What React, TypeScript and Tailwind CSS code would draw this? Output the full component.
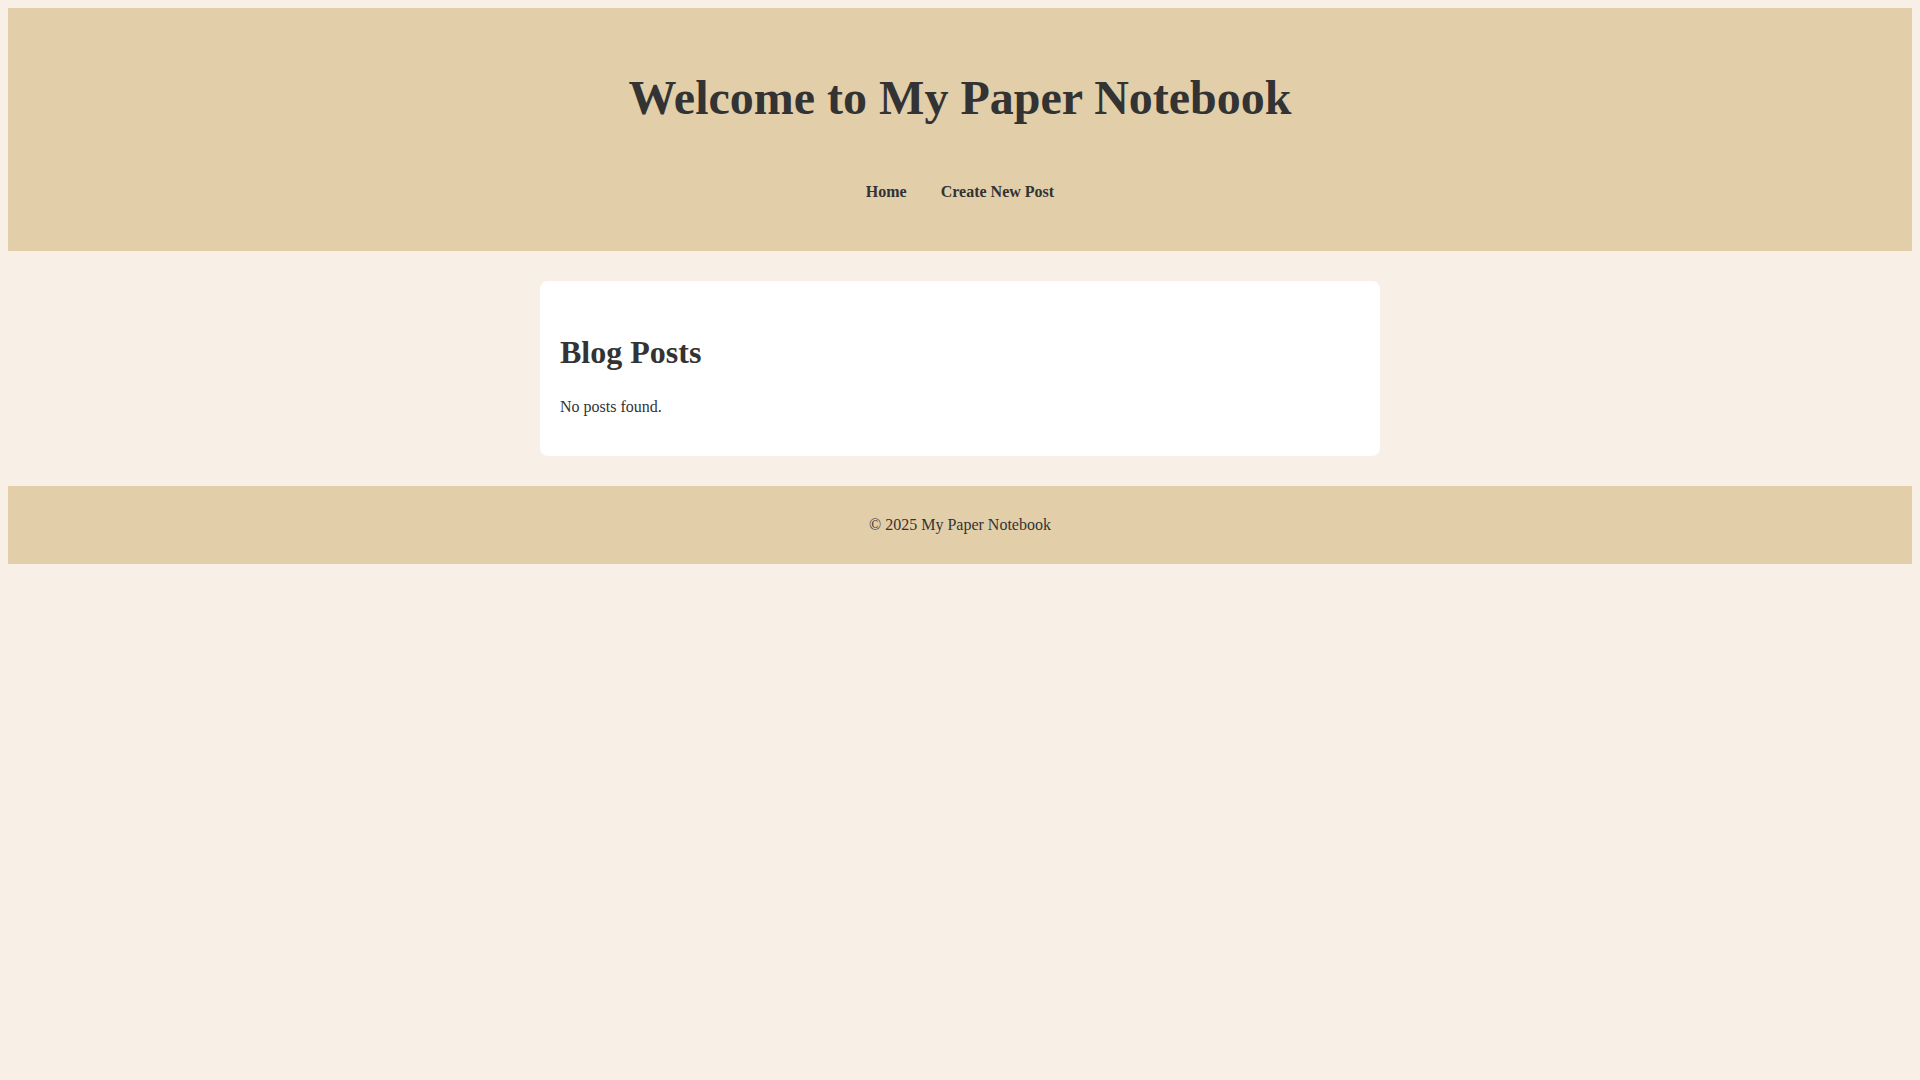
export default function App() {
  return (
    <div
      className="min-h-screen bg-[#f8f0e7] p-2 text-[#333333]"
      style={{ fontFamily: '"Liberation Serif", "Times New Roman", serif' }}
    >
      <header className="bg-[#e2cea9] pt-[62px] pb-[50px] text-center">
        <h1 className="text-[48px] leading-[56px] font-bold">Welcome to My Paper Notebook</h1>
        <nav className="mt-[57px] flex justify-center gap-[34px] text-[16px] leading-[18px] font-bold">
          <a href="#" className="text-[#333333] no-underline">Home</a>
          <a href="#" className="text-[#333333] no-underline">Create New Post</a>
        </nav>
      </header>

      <main className="my-[30px] flex justify-center">
        <section className="w-[840px] rounded-lg bg-white px-5 pt-[53px] pb-[40px]">
          <h2 className="text-[32px] leading-[37px] font-bold">Blog Posts</h2>
          <p className="mt-[27px] text-[16px] leading-[18px]">No posts found.</p>
        </section>
      </main>

      <footer className="bg-[#e2cea9] py-[30px] text-center text-[16px] leading-[18px]">
        © 2025 My Paper Notebook
      </footer>
    </div>
  );
}
